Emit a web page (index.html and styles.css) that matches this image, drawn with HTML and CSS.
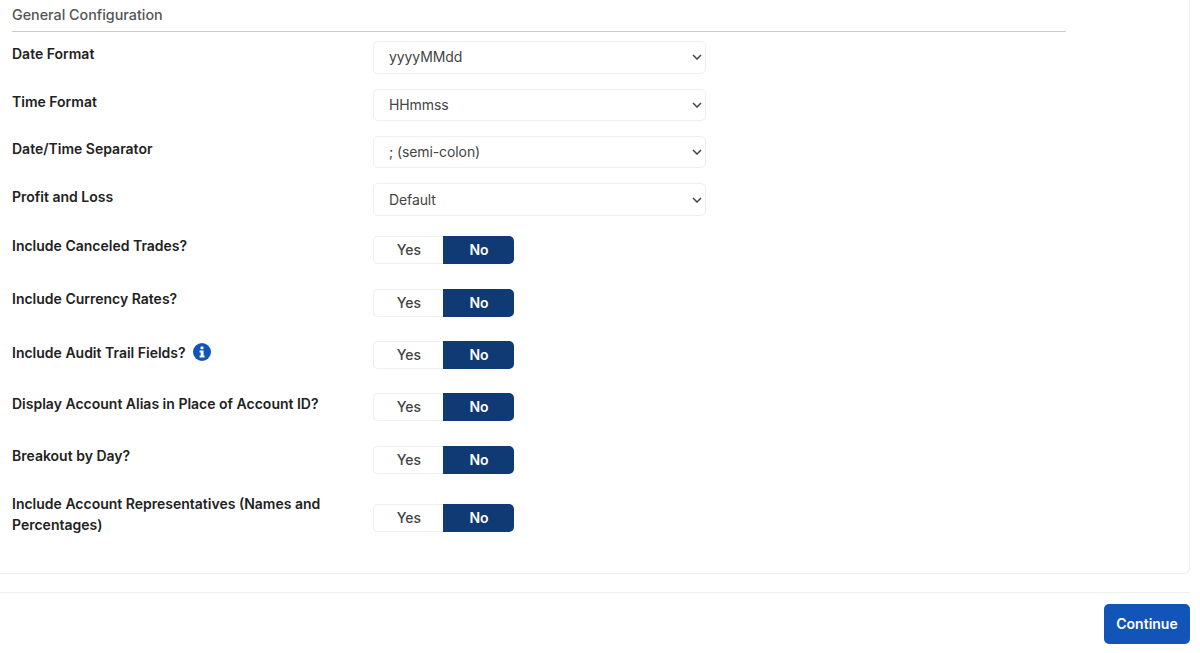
FILE: index.html
```html
<!DOCTYPE html>
<html lang="en">
<head>
  <meta charset="UTF-8">
  <meta name="viewport" content="width=device-width, initial-scale=1.0">
  <title>General Configuration</title>
  <link rel="stylesheet" href="styles.css">
</head>
<body>
  <div class="card">
    <div class="section">
      <h2 class="section-title">General Configuration</h2>

      <div class="form-row select-row">
        <label class="form-label" for="dateFormat">Date Format</label>
        <select id="dateFormat"><option>yyyyMMdd</option></select>
      </div>
      <div class="form-row select-row">
        <label class="form-label" for="timeFormat">Time Format</label>
        <select id="timeFormat"><option>HHmmss</option></select>
      </div>
      <div class="form-row select-row">
        <label class="form-label" for="separator">Date/Time Separator</label>
        <select id="separator"><option>; (semi-colon)</option></select>
      </div>
      <div class="form-row select-row">
        <label class="form-label" for="profitLoss">Profit and Loss</label>
        <select id="profitLoss"><option>Default</option></select>
      </div>

      <div class="form-row toggle-row">
        <span class="form-label">Include Canceled Trades?</span>
        <div class="toggle"><button class="toggle-yes">Yes</button><button class="toggle-no">No</button></div>
      </div>
      <div class="form-row toggle-row">
        <span class="form-label">Include Currency Rates?</span>
        <div class="toggle"><button class="toggle-yes">Yes</button><button class="toggle-no">No</button></div>
      </div>
      <div class="form-row toggle-row">
        <span class="form-label audit-label">Include Audit Trail Fields?
          <svg class="info-icon" viewBox="0 0 18 18" width="18" height="18">
            <circle cx="9" cy="9" r="9" fill="#1254b8"/>
            <rect x="7.5" y="3.4" width="3" height="2.8" rx="0.6" fill="#fff"/>
            <path d="M6.6 7.4h4v5.2h1v2H6.6v-2h1.1V9.4H6.6z" fill="#fff"/>
          </svg>
        </span>
        <div class="toggle"><button class="toggle-yes">Yes</button><button class="toggle-no">No</button></div>
      </div>
      <div class="form-row toggle-row">
        <span class="form-label">Display Account Alias in Place of Account ID?</span>
        <div class="toggle"><button class="toggle-yes">Yes</button><button class="toggle-no">No</button></div>
      </div>
      <div class="form-row toggle-row">
        <span class="form-label">Breakout by Day?</span>
        <div class="toggle"><button class="toggle-yes">Yes</button><button class="toggle-no">No</button></div>
      </div>
      <div class="form-row toggle-row last-row">
        <span class="form-label">Include Account Representatives (Names and Percentages)</span>
        <div class="toggle"><button class="toggle-yes">Yes</button><button class="toggle-no">No</button></div>
      </div>
    </div>
  </div>

  <div class="footer">
    <button class="continue-btn">Continue</button>
  </div>
</body>
</html>
```

FILE: styles.css
```css
body {
  font-family: Inter, "Open Sans", sans-serif;
  color: #222;
  margin: 0;
  padding: 0;
  background-color: #fff;
  overflow: hidden;
}

.card {
  width: 1190px;
  height: 574px;
  box-sizing: border-box;
  border: 1px solid #eee;
  border-top: none;
  border-left: none;
  border-bottom-right-radius: 6px;
}

.section {
  width: 1054px;
  margin-left: 12px;
}

.section-title {
  margin: 0 0 9.2px 0;
  height: 32px;
  box-sizing: border-box;
  padding-top: 6px;
  font-size: 14.3px;
  line-height: 17px;
  font-weight: 500;
  color: #555;
  border-bottom: 1px solid #ccc;
}

.form-row {
  display: flex;
  align-items: flex-start;
}

.select-row {
  height: 47.4px;
}

.toggle-row {
  height: 52.4px;
}

.select-row + .toggle-row {
  margin-top: 5.4px;
}

.last-row {
  margin-top: 5.8px;
}

.form-label {
  width: 361px;
  flex-shrink: 0;
  box-sizing: border-box;
  padding-right: 30px;
  font-size: 14px;
  font-weight: 600;
  line-height: 21px;
  color: #222;
}

.select-row .form-label {
  padding-top: 2.2px;
}

.toggle-row .form-label {
  margin-top: -0.8px;
}

.toggle-row .audit-label {
  margin-top: 1px;
}

.last-row .form-label {
  margin-top: -11px;
}

.info-icon {
  margin-left: 4px;
  vertical-align: -3px;
}

select {
  width: 333px;
  height: 32.5px;
  padding: 0 24px 1px 15px;
  border: 1px solid #eee;
  border-radius: 5px;
  appearance: none;
  background: #fff url("data:image/svg+xml,%3Csvg xmlns='http://www.w3.org/2000/svg' width='10' height='6' viewBox='0 0 10 6'%3E%3Cpath d='M1 1l4 4 4-4' fill='none' stroke='%23444' stroke-width='1.5'/%3E%3C/svg%3E") no-repeat right 3px center;
  font-family: Inter, "Open Sans", sans-serif;
  font-size: 14px;
  letter-spacing: -0.1px;
  color: #444;
}

.toggle {
  display: flex;
  width: 141px;
  height: 28px;
}

.toggle button {
  padding: 0 0 1px 1px;
  font-family: Inter, "Open Sans", sans-serif;
  font-size: 14px;
}

.toggle-yes {
  width: 70px;
  background-color: #fff;
  color: #444;
  font-weight: 500;
  border: 1px solid #eee;
  border-right: none;
  border-radius: 5px 0 0 5px;
}

.toggle-no {
  width: 71px;
  background-color: #0f3a73;
  color: #fff;
  font-weight: 600;
  border: none;
  border-radius: 0 5px 5px 0;
}

.footer {
  width: 1190px;
  margin-top: 18px;
  border-top: 1px solid #eee;
  padding-top: 11px;
  display: flex;
  justify-content: flex-end;
}

.continue-btn {
  width: 86px;
  height: 40px;
  padding: 0 0 2px 0;
  border: none;
  border-radius: 5px;
  background-color: #1254b8;
  color: white;
  font-family: Inter, "Open Sans", sans-serif;
  font-size: 14px;
  font-weight: 600;
}
```
